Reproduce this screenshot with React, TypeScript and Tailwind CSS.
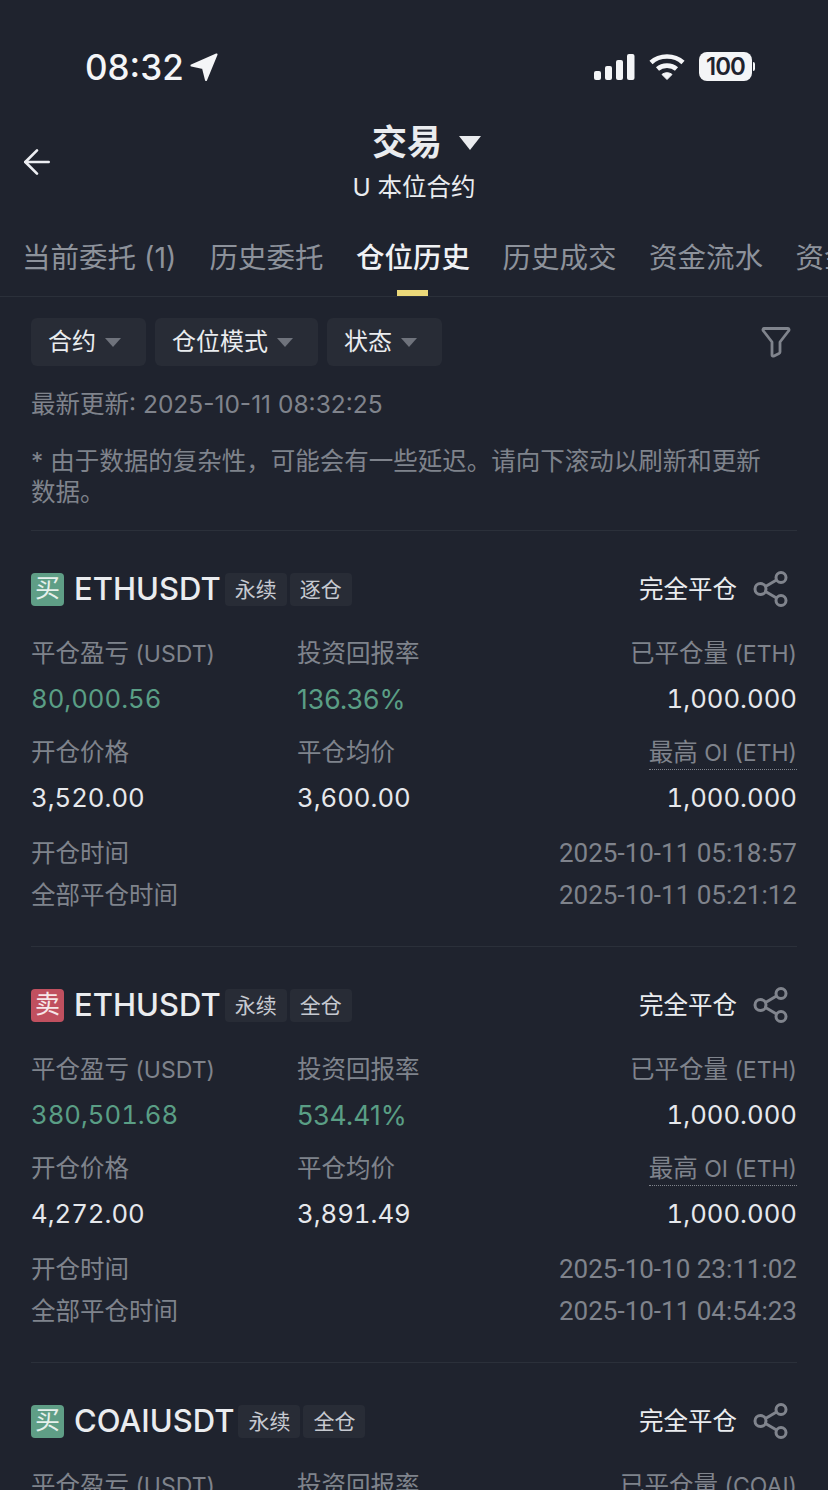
import { ArrowLeft } from "lucide-react";

const font = { fontFamily: '"Inter", "Noto Sans CJK SC", sans-serif' };

type Position = {
  side: "买" | "卖";
  symbol: string;
  margin: string;
  unit: string;
  pnl: string;
  roi: string;
  closedQty: string;
  entry: string;
  exit: string;
  maxOi: string;
  openTime: string;
  closeTime: string;
};

const positions: Position[] = [
  {
    side: "买",
    symbol: "ETHUSDT",
    margin: "逐仓",
    unit: "ETH",
    pnl: "80,000.56",
    roi: "136.36%",
    closedQty: "1,000.000",
    entry: "3,520.00",
    exit: "3,600.00",
    maxOi: "1,000.000",
    openTime: "2025-10-11 05:18:57",
    closeTime: "2025-10-11 05:21:12",
  },
  {
    side: "卖",
    symbol: "ETHUSDT",
    margin: "全仓",
    unit: "ETH",
    pnl: "380,501.68",
    roi: "534.41%",
    closedQty: "1,000.000",
    entry: "4,272.00",
    exit: "3,891.49",
    maxOi: "1,000.000",
    openTime: "2025-10-10 23:11:02",
    closeTime: "2025-10-11 04:54:23",
  },
  {
    side: "买",
    symbol: "COAIUSDT",
    margin: "全仓",
    unit: "COAI",
    pnl: "",
    roi: "",
    closedQty: "",
    entry: "",
    exit: "",
    maxOi: "",
    openTime: "",
    closeTime: "",
  },
];

const tabs = ["当前委托 (1)", "历史委托", "仓位历史", "历史成交", "资金流水", "资金费用"];

function StatusBar() {
  return (
    <div className="flex h-[112px] items-start justify-between pl-[85px] pr-[73px] pt-[47px] text-white">
      <div className="flex items-center gap-[6px]">
        <span className="text-[35px] font-medium leading-[40px] text-[#f4f5f7]">08:32</span>
        <svg width="28" height="28" viewBox="0 0 28 28" fill="#f4f5f7">
          <path d="M26.5 1.5 L1.5 12.5 L13 15 L16 27 Z" strokeLinejoin="round" stroke="#f4f5f7" strokeWidth="2" />
        </svg>
      </div>
      <div className="flex items-center gap-[14px] pt-[5px]">
        <svg width="41" height="26" viewBox="0 0 41 26" fill="#f4f5f7">
          <rect x="0" y="17" width="7" height="9" rx="2" />
          <rect x="11" y="12" width="7" height="14" rx="2" />
          <rect x="22" y="6" width="7" height="20" rx="2" />
          <rect x="33" y="0" width="7.5" height="26" rx="2" />
        </svg>
        <svg width="36" height="28" viewBox="0 0 36 28" fill="none" stroke="#f4f5f7" strokeWidth="4.6">
          <path d="M2 9.5 C 10.5 1.5, 25.5 1.5, 34 9.5" />
          <path d="M8.5 16 C 13.5 11.5, 22.5 11.5, 27.5 16" />
          <path d="M18 26.5 L13 21.5 C 15.5 19.2, 20.5 19.2, 23 21.5 Z" fill="#f4f5f7" strokeWidth="1" />
        </svg>
        <div className="flex items-center gap-[1px]">
          <div className="flex h-[29px] w-[53px] items-center justify-center rounded-[8px] bg-[#f4f5f7] text-[24px] font-semibold tracking-[-1px] text-[#1f232e]">
            100
          </div>
          <div className="h-[9px] w-[2px] rounded-r-full bg-[#f4f5f7]" />
        </div>
      </div>
    </div>
  );
}

function Header() {
  return (
    <div className="relative flex h-[95px] flex-col items-center text-white">
      <ArrowLeft className="absolute left-[17px] top-[30px] h-[40px] w-[40px] text-[#eceef2]" strokeWidth={1.6} />
      <div className="ml-[25px] flex h-[60px] items-center gap-[17px]">
        <span className="text-[35px] font-semibold leading-[60px] text-[#eaecef]">交易</span>
        <span className="mt-[2px] h-0 w-0 border-x-[11px] border-t-[14px] border-x-transparent border-t-[#eaecef]" />
      </div>
      <div className="text-[24.5px] leading-[30px] text-[#eaecef]">U 本位合约</div>
    </div>
  );
}

function Tabs() {
  return (
    <div className="flex h-[90px] gap-[32.5px] overflow-hidden border-b border-[#2b303a] pl-[22px]">
      {tabs.map((tab, i) => (
        <div
          key={tab}
          className={
            i === 2
              ? "relative shrink-0 pt-[31px] text-[28.5px] font-medium leading-[40px] text-[#f0f1f4]"
              : i === 0
                ? "relative w-[155px] shrink-0 pt-[31px] text-[28.5px] leading-[40px] text-[#8d929b]"
                : "relative shrink-0 pt-[31px] text-[28.5px] leading-[40px] text-[#8d929b]"
          }
        >
          {tab}
          {i === 2 && <span className="absolute bottom-0 left-[41px] h-[6px] w-[31px] bg-[#ecd97a]" />}
        </div>
      ))}
    </div>
  );
}

function Filter({ label }: { label: string }) {
  return (
    <div className="flex h-[48px] items-center gap-[9px] rounded-[6px] bg-[#282c36] pl-[17px] pr-[25px] text-[24px] text-[#eaecef]">
      {label}
      <span className="h-0 w-0 border-x-[8px] border-t-[9px] border-x-transparent border-t-[#6f737c]" />
    </div>
  );
}

function Filters() {
  return (
    <div className="flex items-center justify-between pl-[31px] pr-[37px] pt-[21px]">
      <div className="flex gap-[9px]">
        <Filter label="合约" />
        <Filter label="仓位模式" />
        <Filter label="状态" />
      </div>
      <svg width="30" height="34" viewBox="0 0 30 34" fill="none" stroke="#80848d" strokeWidth="2.8" strokeLinejoin="round">
        <path d="M3 3.5 C2 3.5 1.5 5 2.5 6 L11 17 V30 C11 31 12 31.5 13 31 L18 28.5 C19 28 19 27.5 19 27 V17 L27.5 6 C28.5 5 28 3.5 27 3.5 Z" />
      </svg>
    </div>
  );
}

function Label({ cn, latin, dotted }: { cn: string; latin?: string; dotted?: boolean }) {
  return (
    <div className="h-[34px] text-[24.5px] leading-[34px]">
      <span className={dotted ? "inline-block h-[35px] border-b border-dotted border-[#7f838c]" : ""}>
        {cn}
        {latin && <span className="text-[23px]"> {latin}</span>}
      </span>
    </div>
  );
}

function Card({ p }: { p: Position }) {
  const buy = p.side === "买";
  const value = "h-[34px] text-[25.7px] leading-[34px] tabular-nums";
  const roi = "mt-[12px] h-[34px] text-[26.5px] leading-[34px] text-[#5a9e85]";
  return (
    <div className="mx-[31px] h-[416px] border-t border-[#2b303a]">
      <div className="mt-[41px] flex h-[34px] items-center">
        <span
          className={
            buy
              ? "flex h-[33px] w-[33px] items-center justify-center rounded-[4px] bg-[#5f9e86] text-[25px] text-[#e6f0ec]"
              : "flex h-[33px] w-[33px] items-center justify-center rounded-[4px] bg-[#c0505f] text-[25px] text-[#f6e6e8]"
          }
        >
          {p.side}
        </span>
        <span className="ml-[10px] text-[31px] font-medium text-[#eaecef]">{p.symbol}</span>
        <div className="ml-[4px] flex gap-[3px]">
          <span className="w-[62px] rounded-[4px] bg-[#282c36] text-center text-[21px] leading-[33px] text-[#c6c9d0]">永续</span>
          <span className="w-[62px] rounded-[4px] bg-[#282c36] text-center text-[21px] leading-[33px] text-[#c6c9d0]">{p.margin}</span>
        </div>
        <span className="ml-auto text-[24.5px] text-[#eaecef]">完全平仓</span>
        <svg className="ml-[16px] mr-[8px]" width="36" height="36" viewBox="0 0 36 36" fill="none" stroke="#80848d" strokeWidth="3">
          <circle cx="7.5" cy="18" r="5.5" />
          <circle cx="28" cy="6.5" r="5" />
          <circle cx="28" cy="29.5" r="5" />
          <path d="M12.5 15.5 L23.5 9 M12.5 20.5 L23.5 27" />
        </svg>
      </div>
      <div className="mt-[30px] grid grid-cols-[266px_1fr_auto] text-[#7f838c]">
        <Label cn="平仓盈亏" latin="(USDT)" />
        <Label cn="投资回报率" />
        <div className="text-right">
          <Label cn="已平仓量" latin={`(${p.unit})`} />
        </div>
        <div className={`${value} mt-[12px] text-[#5a9e85]`}>{p.pnl}</div>
        <div className={roi}>{p.roi}</div>
        <div className={`${value} mt-[12px] text-right text-[#e6e8ec]`}>{p.closedQty}</div>
        <div className="mt-[19px]">
          <Label cn="开仓价格" />
        </div>
        <div className="mt-[19px]">
          <Label cn="平仓均价" />
        </div>
        <div className="mt-[19px] text-right">
          <Label cn="最高" latin={`OI (${p.unit})`} dotted />
        </div>
        <div className={`${value} mt-[12px] text-[#e6e8ec]`}>{p.entry}</div>
        <div className={`${value} mt-[12px] text-[#e6e8ec]`}>{p.exit}</div>
        <div className={`${value} mt-[12px] text-right text-[#e6e8ec]`}>{p.maxOi}</div>
      </div>
      <div className="mt-[21px] flex h-[34px] items-center justify-between leading-[34px] text-[#7f838c]">
        <span className="text-[24.5px]">开仓时间</span>
        <span className="font-['Roboto'] text-[26px]">{p.openTime}</span>
      </div>
      <div className="mt-[8px] flex h-[34px] items-center justify-between leading-[34px] text-[#7f838c]">
        <span className="text-[24.5px]">全部平仓时间</span>
        <span className="font-['Roboto'] text-[26px]">{p.closeTime}</span>
      </div>
    </div>
  );
}

export default function App() {
  return (
    <div className="h-[1490px] w-[828px] overflow-hidden bg-[#1f232e]" style={font}>
      <StatusBar />
      <Header />
      <Tabs />
      <Filters />
      <div className="ml-[31px] mt-[21px] text-[24.5px] leading-[34px] text-[#7f838c]">最新更新: 2025-10-11 08:32:25</div>
      <div className="mb-[22px] ml-[31px] mr-[50px] mt-[25px] h-[62px] text-[24.5px] leading-[31px] text-[#7f838c]">
        * 由于数据的复杂性，可能会有一些延迟。请向下滚动以刷新和更新数据。
      </div>
      {positions.map((p, i) => (
        <Card key={i} p={p} />
      ))}
    </div>
  );
}
